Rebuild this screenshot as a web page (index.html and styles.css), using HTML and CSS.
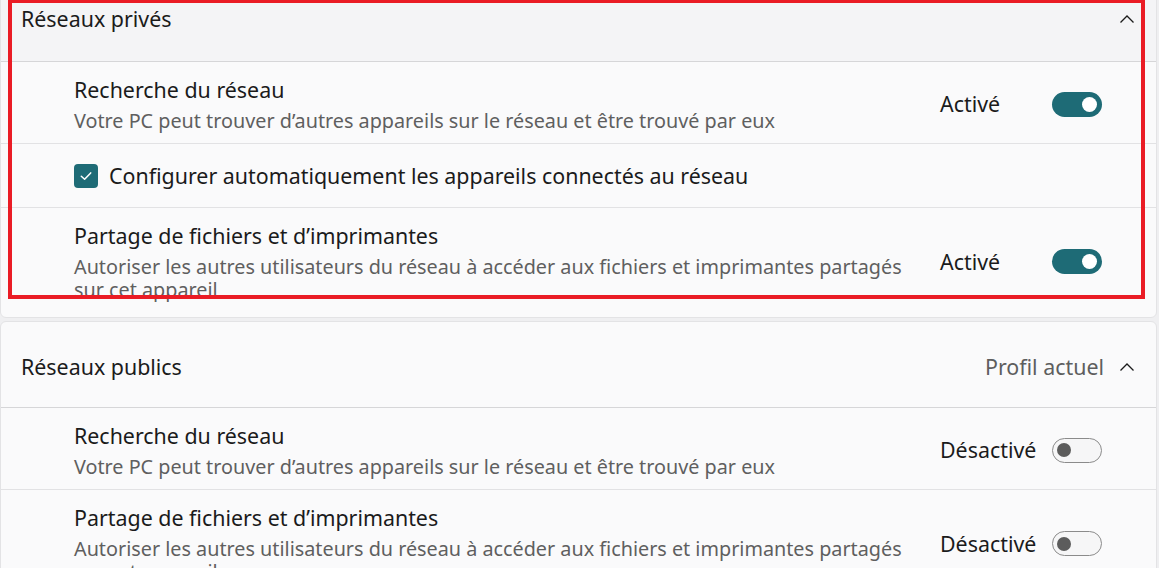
FILE: index.html
```html
<!DOCTYPE html>
<html lang="fr">
<head>
<meta charset="utf-8">
<title>Réseaux</title>
<link rel="stylesheet" href="styles.css">
</head>
<body>
<div class="page">
  <section class="card">
    <div class="card-header card-header-hover">
      <span class="card-title">Réseaux privés</span>
      <div class="header-right">
        <svg class="chevron" width="16" height="10" viewBox="0 0 16 10"><path d="M1.5 8.5 L8 2 L14.5 8.5" fill="none" stroke="#1b1b1b" stroke-width="1.3"/></svg>
      </div>
    </div>
    <div class="row">
      <div class="row-text">
        <div class="row-title">Recherche du réseau</div>
        <div class="row-desc">Votre PC peut trouver d’autres appareils sur le réseau et être trouvé par eux</div>
      </div>
      <div class="toggle-wrap">
        <span class="toggle-label">Activé</span>
        <span class="toggle toggle-on"><span class="knob"></span></span>
      </div>
    </div>
    <div class="row row-check">
      <span class="checkbox"><svg width="14" height="14" viewBox="0 0 14 14"><path d="M2.3 7.2 L5.6 10.3 L11.7 3.9" fill="none" stroke="#ffffff" stroke-width="1.5" stroke-linecap="round" stroke-linejoin="round"/></svg></span>
      <span class="check-label">Configurer automatiquement les appareils connectés au réseau</span>
    </div>
    <div class="row row-tall">
      <div class="row-text">
        <div class="row-title">Partage de fichiers et d’imprimantes</div>
        <div class="row-desc">Autoriser les autres utilisateurs du réseau à accéder aux fichiers et imprimantes partagés sur cet appareil</div>
      </div>
      <div class="toggle-wrap">
        <span class="toggle-label">Activé</span>
        <span class="toggle toggle-on"><span class="knob"></span></span>
      </div>
    </div>
  </section>

  <section class="card">
    <div class="card-header card-header-low">
      <span class="card-title">Réseaux publics</span>
      <div class="header-right">
        <span class="header-status">Profil actuel</span>
        <svg class="chevron" width="16" height="10" viewBox="0 0 16 10"><path d="M1.5 8.5 L8 2 L14.5 8.5" fill="none" stroke="#1b1b1b" stroke-width="1.3"/></svg>
      </div>
    </div>
    <div class="row">
      <div class="row-text">
        <div class="row-title">Recherche du réseau</div>
        <div class="row-desc">Votre PC peut trouver d’autres appareils sur le réseau et être trouvé par eux</div>
      </div>
      <div class="toggle-wrap">
        <span class="toggle-label">Désactivé</span>
        <span class="toggle toggle-off"><span class="knob"></span></span>
      </div>
    </div>
    <div class="row row-tall">
      <div class="row-text">
        <div class="row-title">Partage de fichiers et d’imprimantes</div>
        <div class="row-desc">Autoriser les autres utilisateurs du réseau à accéder aux fichiers et imprimantes partagés sur cet appareil</div>
      </div>
      <div class="toggle-wrap">
        <span class="toggle-label">Désactivé</span>
        <span class="toggle toggle-off"><span class="knob"></span></span>
      </div>
    </div>
  </section>

  <div class="annotation"></div>
</div>
</body>
</html>
```

FILE: styles.css
```css
html, body {
  margin: 0;
  padding: 0;
  background: #efeff1;
  overflow: hidden;
}

body {
  font-family: "Noto Sans", "Open Sans", sans-serif;
  color: #1b1b1b;
  width: 1159px;
  height: 568px;
}

.page {
  position: relative;
  margin-top: -25px;
  width: 1157px;
  display: flex;
  flex-direction: column;
  gap: 3px;
}

.card {
  background: #fafafb;
  border: 1px solid #e3e3e5;
  border-radius: 6px;
  overflow: hidden;
}

.card-header {
  height: 85px;
  box-sizing: border-box;
  display: flex;
  align-items: center;
  justify-content: space-between;
  padding: 0 21px 0 20px;
}

.card-header-hover {
  background: #f4f4f6;
}

.card-header-low {
  padding-top: 5px;
}

.card-title {
  font-size: 21.4px;
  line-height: 28px;
}

.header-right {
  display: flex;
  align-items: center;
  gap: 15px;
}

.header-status {
  font-size: 21.4px;
  line-height: 28px;
  color: #5e5e5e;
}

.chevron {
  display: block;
}

.row {
  border-top: 1px solid #e2e2e4;
  display: flex;
  align-items: center;
  padding: 14px 54px 11px 73px;
}

.row-tall {
  padding-bottom: 16px;
}

.card-header + .row {
  border-top-color: #d6d6d8;
}

.row-text {
  flex: 1;
  margin-right: 24px;
}

.row-title {
  font-size: 21.4px;
  line-height: 28px;
}

.row-desc {
  font-size: 19.8px;
  line-height: 23px;
  margin-top: 5px;
  color: #5f5f5f;
}

.toggle-wrap {
  display: flex;
  align-items: center;
}

.toggle-label {
  width: 112px;
  font-size: 21.4px;
  line-height: 28px;
}

.toggle {
  box-sizing: border-box;
  width: 50px;
  height: 25px;
  border-radius: 13px;
  display: flex;
  align-items: center;
}

.toggle-on {
  background: #1e6b76;
  justify-content: flex-end;
  padding-right: 5px;
}

.toggle-on .knob {
  width: 15px;
  height: 15px;
  border-radius: 50%;
  background: #ffffff;
}

.toggle-off {
  background: #f6f6f7;
  border: 1px solid #8b8b8b;
  padding-left: 4px;
}

.toggle-off .knob {
  width: 14px;
  height: 14px;
  border-radius: 50%;
  background: #5c5c5c;
}

.row-check {
  padding-top: 19px;
  padding-bottom: 19px;
  gap: 11px;
}

.checkbox {
  width: 24px;
  height: 24px;
  border-radius: 4px;
  background: #1e6b76;
  display: flex;
  align-items: center;
  justify-content: center;
}

.check-label {
  font-size: 21.4px;
  line-height: 25px;
}

.annotation {
  position: absolute;
  left: 8px;
  top: 24px;
  width: 1137px;
  height: 300px;
  box-sizing: border-box;
  border: 4px solid #ea1c25;
  pointer-events: none;
}
```
